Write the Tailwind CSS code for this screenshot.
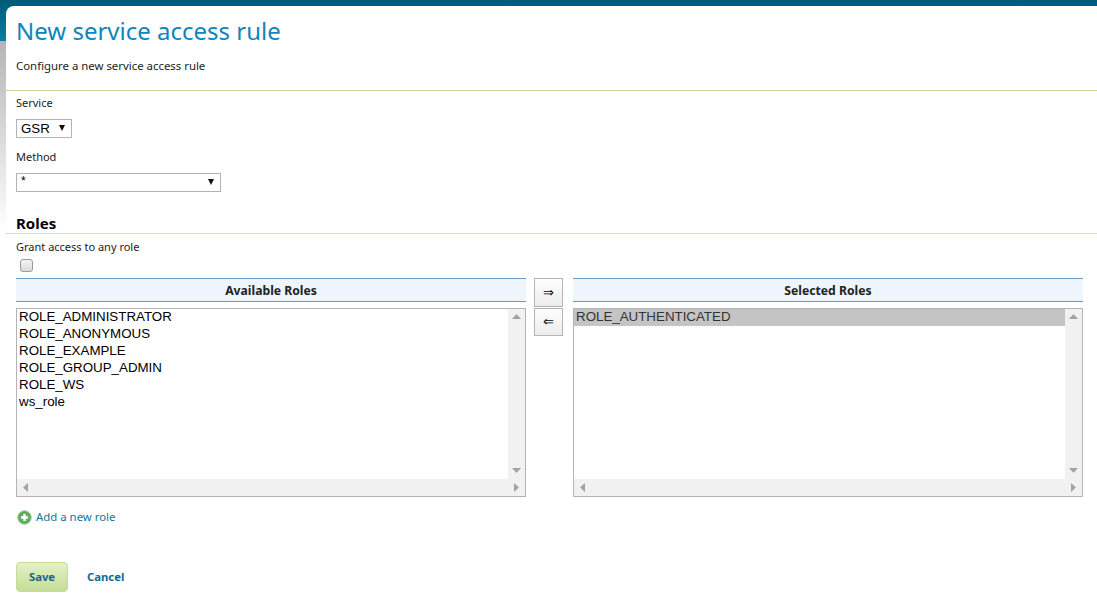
<!DOCTYPE html>
<html lang="en">
<head>
    <meta charset="UTF-8">
    <title>New service access rule</title>
    <script src="https://cdn.jsdelivr.net/npm/@tailwindcss/browser@4"></script>
</head>
<body class="bg-white h-[601px] w-[1097px] overflow-hidden relative font-['Noto_Sans',sans-serif] text-[#222]">
    <!-- Backdrop behind the panel -->
    <div class="absolute top-0 left-0 w-full h-[41px] bg-gradient-to-b from-[#005a78] to-[#0a7fa6]"></div>
    <div class="absolute top-[41px] left-0 w-[6px] h-[190px] bg-gradient-to-b from-[#b5b5b5] to-white"></div>

    <!-- Panel -->
    <main class="absolute top-[6px] left-[6px] right-0 bottom-0 bg-white rounded-tl-[8px] pt-[8px]">
        <h1 class="pl-[10px] h-[34px] leading-[33px] text-[24px] text-[#1085bb]">New service access rule</h1>
        <p class="pl-[10px] mt-[9px] h-[18px] leading-[18px] text-[11.400px]">Configure a new service access rule</p>
        <div class="mt-[15px] border-t border-[#c5dc96]"></div>

        <form class="pl-[10px]">
            <label class="block mt-[4px] h-[16px] leading-[16px] text-[11px]">Service</label>
            <div class="relative mt-[8px] w-[56px] h-[19px] border border-[#b4b4b4] font-['Liberation_Sans',sans-serif] text-[13.330px] leading-[17px] pl-[4px] text-black">
                GSR
                <svg class="absolute right-[6px] top-[5px]" width="6" height="6" viewBox="0 0 6 6"><path d="M0 0h6L3 6z" fill="#111"/></svg>
            </div>
            <label class="block mt-[11px] h-[16px] leading-[16px] text-[11px]">Method</label>
            <div class="relative mt-[8px] w-[205px] h-[19px] border border-[#b4b4b4] font-['Liberation_Sans',sans-serif] text-[12px] leading-[15px] pl-[4px] text-black">
                *
                <svg class="absolute right-[6px] top-[5px]" width="6" height="6" viewBox="0 0 6 6"><path d="M0 0h6L3 6z" fill="#111"/></svg>
            </div>
        </form>

        <h2 class="pl-[10px] mt-[23px] h-[18px] leading-[16px] text-[15px] font-bold text-black">Roles</h2>
        <div class="border-t border-[#cfdcb4]"></div>

        <div class="pl-[10px] pr-[14px]">
            <label class="block mt-[5px] h-[16px] leading-[16px] text-[11px]">Grant access to any role</label>
            <div class="mt-[4px] ml-[4px] w-[13px] h-[13px] rounded-[3px] border border-[#9a9a9a] bg-gradient-to-b from-[#f4f4f4] to-[#dcdcdc]"></div>

            <!-- Role picker -->
            <div class="mt-[6px] flex">
                <section class="w-[510px]">
                    <h3 class="h-[24px] leading-[23px] border-y border-[#6f9ac4] bg-[#eef5fd] text-center text-[12.200px] font-bold">Available Roles</h3>
                    <div class="relative mt-[6px] h-[189px] border border-[#b4b4b4] pl-[2px] font-['Liberation_Sans',sans-serif] text-[13.330px] leading-[17px] text-black">
                        <div class="-mt-px">ROLE_ADMINISTRATOR</div>
                        <div>ROLE_ANONYMOUS</div>
                        <div>ROLE_EXAMPLE</div>
                        <div>ROLE_GROUP_ADMIN</div>
                        <div>ROLE_WS</div>
                        <div>ws_role</div>
                        <div class="absolute top-0 right-0 bottom-0 w-[17px] bg-[#f1f1f1]">
                            <svg class="absolute top-[5px] left-[4px]" width="9" height="5" viewBox="0 0 9 5"><path d="M4.500 0L9 5H0z" fill="#a3a3a3"/></svg>
                            <svg class="absolute bottom-[23px] left-[4px]" width="9" height="5" viewBox="0 0 9 5"><path d="M0 0h9L4.500 5z" fill="#a3a3a3"/></svg>
                        </div>
                        <div class="absolute left-0 right-0 bottom-0 h-[17px] bg-[#f1f1f1]">
                            <svg class="absolute top-[4px] left-[6px]" width="5" height="9" viewBox="0 0 5 9"><path d="M5 0v9L0 4.500z" fill="#a3a3a3"/></svg>
                            <svg class="absolute top-[4px] right-[6px]" width="5" height="9" viewBox="0 0 5 9"><path d="M0 0v9l5-4.500z" fill="#a3a3a3"/></svg>
                        </div>
                    </div>
                </section>

                <div class="ml-[8px] w-[29px] shrink-0">
                    <button type="button" class="block w-[29px] h-[29px] border border-[#b4b4b4] bg-gradient-to-b from-white to-[#ececec] text-[13px] leading-[26px] text-black font-['DejaVu_Sans',sans-serif]">⇒</button>
                    <button type="button" class="block mt-px w-[29px] h-[28px] border border-[#b4b4b4] bg-gradient-to-b from-white to-[#ececec] text-[13px] leading-[26px] text-black font-['DejaVu_Sans',sans-serif]">⇐</button>
                </div>

                <section class="ml-[10px] w-[510px]">
                    <h3 class="h-[24px] leading-[23px] border-y border-[#6f9ac4] bg-[#eef5fd] text-center text-[12.200px] font-bold">Selected Roles</h3>
                    <div class="relative mt-[6px] h-[189px] border border-[#b4b4b4] font-['Liberation_Sans',sans-serif] text-[13.330px] leading-[17px] text-[#333]">
                        <div class="pl-[2px] bg-[#c4c4c4] h-[17px] leading-[15px]">ROLE_AUTHENTICATED</div>
                        <div class="absolute top-0 right-0 bottom-0 w-[17px] bg-[#f1f1f1]">
                            <svg class="absolute top-[5px] left-[4px]" width="9" height="5" viewBox="0 0 9 5"><path d="M4.500 0L9 5H0z" fill="#a3a3a3"/></svg>
                            <svg class="absolute bottom-[23px] left-[4px]" width="9" height="5" viewBox="0 0 9 5"><path d="M0 0h9L4.500 5z" fill="#a3a3a3"/></svg>
                        </div>
                        <div class="absolute left-0 right-0 bottom-0 h-[17px] bg-[#f1f1f1]">
                            <svg class="absolute top-[4px] left-[6px]" width="5" height="9" viewBox="0 0 5 9"><path d="M5 0v9L0 4.500z" fill="#a3a3a3"/></svg>
                            <svg class="absolute top-[4px] right-[6px]" width="5" height="9" viewBox="0 0 5 9"><path d="M0 0v9l5-4.500z" fill="#a3a3a3"/></svg>
                        </div>
                    </div>
                </section>
            </div>

            <a class="mt-[12px] flex items-center h-[16px] text-[11.400px] text-[#14759e]">
                <svg width="15" height="15" viewBox="0 0 15 15" class="ml-[1px] mr-[4px]">
                    <circle cx="7.500" cy="7.500" r="6.800" fill="#5fae5f" stroke="#a5cfa3"/>
                    <path d="M6.300 4h2.400v2.300H11v2.400H8.700V11H6.300V8.700H4V6.300h2.300z" fill="#fff"/>
                </svg>
                Add a new role
            </a>

            <div class="mt-[37px] flex items-center">
                <button type="button" class="w-[52px] h-[30px] rounded-[4px] border border-[#c5dc96] bg-gradient-to-b from-[#e4f0c6] to-[#c5dd96] text-[11.300px] font-bold text-[#14688c]">Save</button>
                <a class="ml-[19px] text-[11.300px] font-bold text-[#14688c]">Cancel</a>
            </div>
        </div>
    </main>
</body>
</html>
